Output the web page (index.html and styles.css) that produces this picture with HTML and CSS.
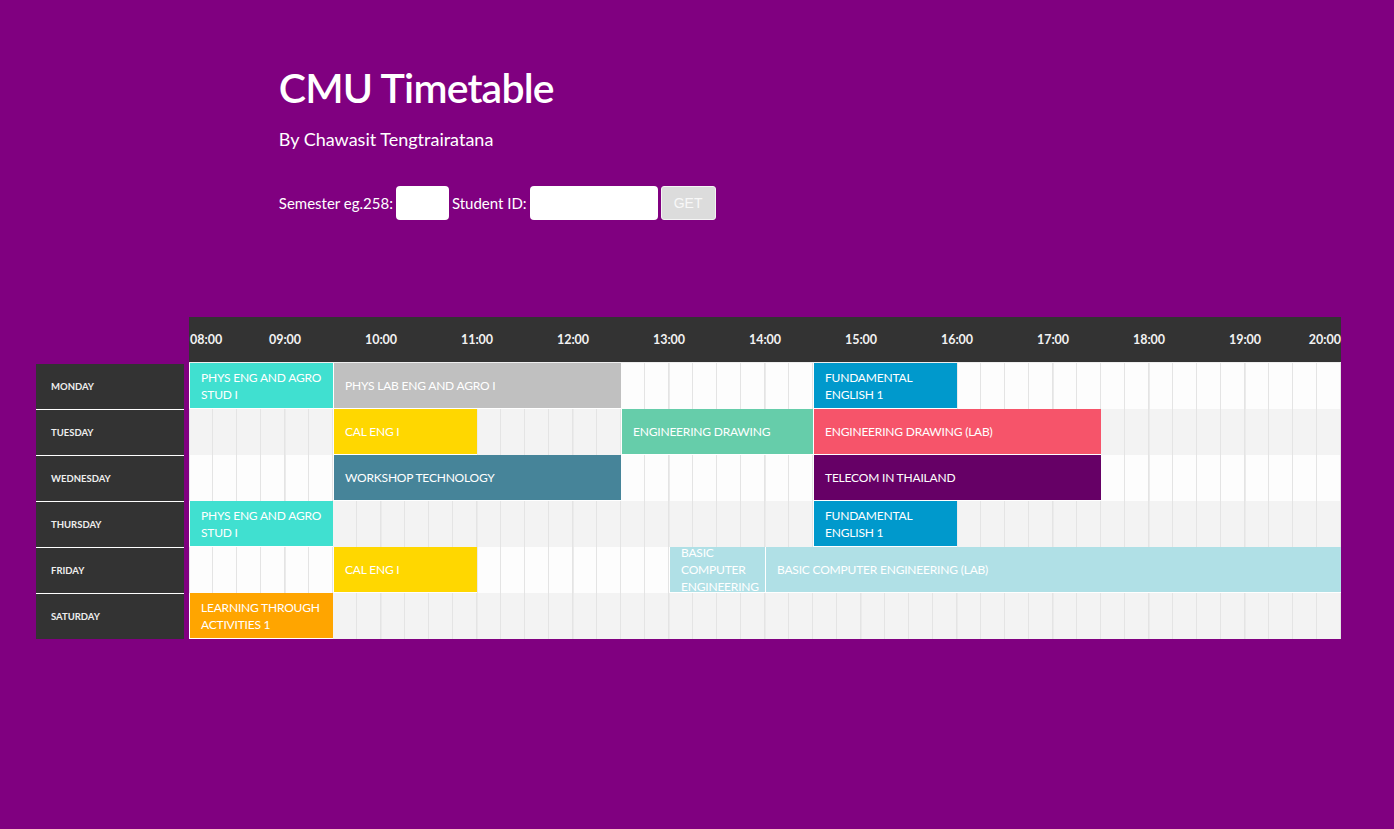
FILE: index.html
```html
<!DOCTYPE html>
<html lang="en">
<head>
<meta charset="utf-8">
<title>CMU Timetable</title>
<link rel="stylesheet" href="styles.css">
</head>
<body>
<header class="intro">
  <h1 class="title">CMU Timetable</h1>
  <p class="byline">By Chawasit Tengtrairatana</p>
  <form class="query">
    <label class="query-label" for="sem">Semester eg.258:</label>
    <input class="field field-sem" id="sem" type="text">
    <label class="query-label" for="sid">Student ID:</label>
    <input class="field field-sid" id="sid" type="text">
    <button class="get-btn" type="button">GET</button>
  </form>
</header>

<section class="timetable">
  <div class="corner"></div>
  <div class="timeline-head">
    <span class="hour hour-first">08:00</span>
    <span class="hour">09:00</span>
    <span class="hour">10:00</span>
    <span class="hour">11:00</span>
    <span class="hour">12:00</span>
    <span class="hour">13:00</span>
    <span class="hour">14:00</span>
    <span class="hour">15:00</span>
    <span class="hour">16:00</span>
    <span class="hour">17:00</span>
    <span class="hour">18:00</span>
    <span class="hour">19:00</span>
    <span class="hour hour-last">20:00</span>
  </div>

  <div class="day day-first">MONDAY</div>
  <div class="slots slots-light">
    <div class="event c-turquoise" style="grid-column: 1 / 7">PHYS ENG AND AGRO STUD I</div>
    <div class="event c-silver" style="grid-column: 7 / 19">PHYS LAB ENG AND AGRO I</div>
    <div class="event c-blue" style="grid-column: 27 / 33">FUNDAMENTAL ENGLISH 1</div>
  </div>

  <div class="day">TUESDAY</div>
  <div class="slots slots-gray">
    <div class="event c-gold" style="grid-column: 7 / 13">CAL ENG I</div>
    <div class="event c-aqua" style="grid-column: 19 / 27">ENGINEERING DRAWING</div>
    <div class="event c-red" style="grid-column: 27 / 39">ENGINEERING DRAWING (LAB)</div>
  </div>

  <div class="day">WEDNESDAY</div>
  <div class="slots slots-light">
    <div class="event c-steel" style="grid-column: 7 / 19">WORKSHOP TECHNOLOGY</div>
    <div class="event c-plum" style="grid-column: 27 / 39">TELECOM IN THAILAND</div>
  </div>

  <div class="day">THURSDAY</div>
  <div class="slots slots-gray">
    <div class="event c-turquoise" style="grid-column: 1 / 7">PHYS ENG AND AGRO STUD I</div>
    <div class="event c-blue" style="grid-column: 27 / 33">FUNDAMENTAL ENGLISH 1</div>
  </div>

  <div class="day">FRIDAY</div>
  <div class="slots slots-light">
    <div class="event c-gold" style="grid-column: 7 / 13">CAL ENG I</div>
    <div class="event c-powder" style="grid-column: 21 / 25">BASIC COMPUTER ENGINEERING</div>
    <div class="event c-powder" style="grid-column: 25 / 49">BASIC COMPUTER ENGINEERING (LAB)</div>
  </div>

  <div class="day">SATURDAY</div>
  <div class="slots slots-gray">
    <div class="event c-orange" style="grid-column: 1 / 7">LEARNING THROUGH ACTIVITIES 1</div>
  </div>
</section>
</body>
</html>
```

FILE: styles.css
```css
* {
  box-sizing: border-box;
}

html,
body {
  margin: 0;
  padding: 0;
}

body {
  background: #800080;
  color: #fff;
  font-family: Lato, "Liberation Sans", sans-serif;
  min-height: 829px;
}

.intro {
  margin-left: 20%;
  padding-top: 67px;
}

.title {
  margin: 0;
  font-size: 41px;
  line-height: 1;
  font-weight: 600;
  letter-spacing: -0.8px;
}

.byline {
  margin: 20px 0 0;
  font-size: 18px;
  line-height: 22px;
}

.query {
  display: flex;
  align-items: center;
  gap: 3px;
  margin-top: 36px;
}

.query-label {
  font-size: 15px;
}

.field {
  height: 34px;
  border: none;
  border-radius: 4px;
  background: #fff;
  padding: 0 6px;
}

.field-sem {
  width: 53px;
}

.field-sid {
  width: 128px;
}

.get-btn {
  width: 55px;
  height: 34px;
  border: 1px solid #f4f4f4;
  border-radius: 3px;
  background: #dcdcdc;
  color: #f8f8f8;
  font-family: "Liberation Sans", Arial, sans-serif;
  font-size: 14px;
}

.timetable {
  display: grid;
  grid-template-columns: 148px 1152px;
  column-gap: 5px;
  margin: 97px 0 0 36px;
}

.timeline-head {
  display: flex;
  align-items: center;
  height: 46px;
  background: #333;
  border-bottom: 1px solid #eee;
}

.hour {
  width: 96px;
  text-align: center;
  font-size: 12.5px;
  font-weight: 700;
  color: #f2f2f2;
}

.hour-first {
  width: 48px;
  text-align: left;
  padding-left: 1px;
}

.hour-last {
  width: 48px;
  text-align: right;
}

.day {
  display: flex;
  align-items: center;
  height: 46px;
  padding-left: 15px;
  background: #333;
  border-top: 1px solid #fff;
  font-size: 9.5px;
  font-weight: 700;
  color: #eee;
}

.day-first {
  border-top: none;
  height: 45px;
  margin-top: 1px;
}

.slots {
  display: grid;
  grid-template-columns: repeat(48, 24px);
  height: 46px;
  background-image:
    repeating-linear-gradient(90deg, transparent 0 23px, #e4e4e4 23px 24px),
    repeating-linear-gradient(90deg, #ebebeb 0 1px, transparent 1px 95px, #e4e4e4 95px 96px);
}

.slots-light {
  background-color: #fdfdfd;
}

.slots-gray {
  background-color: #f3f3f3;
}

.event {
  grid-row: 1;
  display: flex;
  align-items: center;
  overflow: hidden;
  padding: 0 0 0 11px;
  border-left: 1px solid #fff;
  border-bottom: 1px solid #fff;
  color: #fff;
  font-size: 12px;
  letter-spacing: -0.2px;
  line-height: 17px;
  text-transform: uppercase;
}

.c-turquoise { background: #40e0d0; }
.c-silver { background: #c0c0c0; }
.c-blue { background: #0099cc; }
.c-gold { background: #ffd700; }
.c-aqua { background: #66cdaa; }
.c-red { background: #f6546a; }
.c-steel { background: #468499; }
.c-plum { background: #660066; }
.c-powder { background: #b0e0e6; }
.c-orange { background: #ffa500; }
```
